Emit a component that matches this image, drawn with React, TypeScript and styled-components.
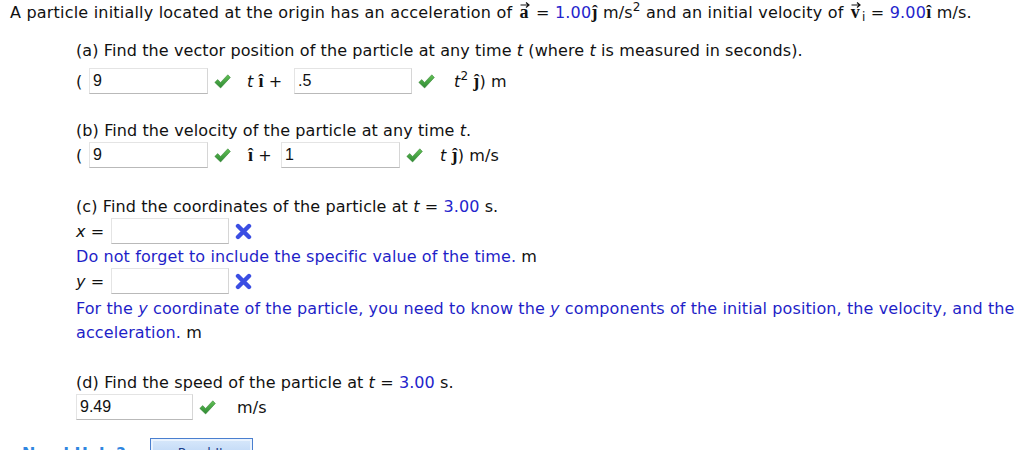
import React from "react";
import styled, { createGlobalStyle } from "styled-components";

const Global = createGlobalStyle`
  html, body { margin: 0; padding: 0; background: #fff; }
  body { font-family: "DejaVu Sans", Verdana, sans-serif; font-size: 16px; letter-spacing: 0.1px; color: #111; overflow: hidden; }
`;

const Page = styled.div`
  padding: 0 0 0 10px;
  height: 450px;
  overflow: hidden;
`;

const Question = styled.div`
  line-height: 24px;
  white-space: nowrap;
  letter-spacing: 0.2px;
`;

const Part = styled.div<{ $top: number }>`
  margin: ${(p) => p.$top}px 0 0 66px;
`;

const Title = styled.div`
  line-height: 22px;
  white-space: nowrap;
`;

const Row = styled.div<{ $top?: number }>`
  display: flex;
  align-items: center;
  height: 26px;
  margin-top: ${(p) => p.$top ?? 0}px;
  white-space: nowrap;
`;

const Hint = styled.div<{ $top?: number; $lh?: number }>`
  line-height: ${(p) => p.$lh ?? 24}px;
  margin-top: ${(p) => p.$top ?? 0}px;
  color: #1f1fc8;
  white-space: nowrap;
`;

const Plain = styled.span`
  color: #111;
`;

const Blue = styled.span`
  color: #2424cc;
`;

const Em = styled.i`
  font-style: italic;
`;

const Label = styled.span<{ $w?: number }>`
  display: inline-block;
  width: ${(p) => (p.$w ? `${p.$w}px` : "auto")};
`;

const Input = styled.div<{ $w?: number }>`
  box-sizing: border-box;
  width: ${(p) => p.$w ?? 119}px;
  height: 26px;
  border: 1px solid #e4e4e4;
  border-bottom-color: #b9b9b9;
  border-right-color: #d6d6d6;
  padding: 0 3px;
  line-height: 24px;
  font-family: "Liberation Sans", Arial, sans-serif;
  font-size: 16px;
  letter-spacing: 0;
  color: #111;
  background: #fff;
`;

const Mark = styled.span<{ $after: number }>`
  display: inline-flex;
  width: 17px;
  height: 17px;
  margin: 0 ${(p) => p.$after}px 0 6px;
  align-items: center;
  justify-content: center;
`;

const Vec = styled.span`
  position: relative;
  display: inline-block;
  padding: 0 2px;
  font-family: "Liberation Serif", "Times New Roman", serif;
  font-weight: bold;
  font-size: 18px;
  line-height: 20px;
`;

const Arrow = styled.svg`
  position: absolute;
  left: 2px;
  top: -1px;
  width: 10px;
  height: 7px;
`;

const Unit = styled.b`
  font-family: "Liberation Serif", "Times New Roman", serif;
  font-weight: bold;
  font-size: 18px;
`;

const Sub = styled.sub`
  font-size: 12px;
  vertical-align: -3px;
  line-height: 0;
`;

const Sup = styled.sup`
  font-size: 12px;
  vertical-align: 7px;
  line-height: 0;
`;

const HelpRow = styled.div`
  display: flex;
  align-items: flex-start;
  margin: 18px 0 0 12px;
  gap: 24px;
`;

const HelpText = styled.span`
  color: #2f86e0;
  font-weight: bold;
  font-size: 16px;
  line-height: 20px;
  padding-top: 6px;
`;

const HelpButton = styled.div`
  box-sizing: border-box;
  width: 103px;
  height: 24px;
  border: 1px solid #4a7fcf;
  background: linear-gradient(#d8e8fb, #b7d2f4);
  box-shadow: inset 0 0 0 2px #eaf3fe;
  color: #1d3f8a;
  font-size: 13px;
  text-align: center;
  line-height: 28px;
`;

const Check = ({ after }: { after: number }) => (
  <Mark $after={after}>
    <svg width="17" height="15" viewBox="0 0 17 15">
      <defs>
        <linearGradient id="g" x1="0" y1="0" x2="0" y2="1">
          <stop offset="0" stopColor="#62c055" />
          <stop offset="1" stopColor="#2e8a33" />
        </linearGradient>
      </defs>
      <path d="M0.8 8.4 L3.6 5.6 L6.6 8.4 L13.8 0.8 L16.4 3.4 L6.6 14 Z" fill="url(#g)" stroke="#2e7d2e" strokeWidth="0.5" strokeLinejoin="round" />
    </svg>
  </Mark>
);

const Cross = ({ after }: { after: number }) => (
  <Mark $after={after}>
    <svg width="17" height="17" viewBox="0 0 17 17">
      <path d="M3 3 L14 14 M14 3 L3 14" stroke="#3b4ee3" strokeWidth="4.4" strokeLinecap="round" />
    </svg>
  </Mark>
);

const VecSym = ({ ch }: { ch: string }) => (
  <Vec>
    {ch}
    <Arrow viewBox="0 0 10 7">
      <path d="M0.5 4 H8.5 M6 1.5 L9 4 L6 6.5" stroke="#111" strokeWidth="1.2" fill="none" />
    </Arrow>
  </Vec>
);

export default function App() {
  return (
    <>
      <Global />
      <Page>
        <Question>
          A particle initially located at the origin has an acceleration of <VecSym ch="a" /> = <Blue>1.00</Blue>
          <Unit>ĵ</Unit> m/s<Sup>2</Sup> and an initial velocity of <VecSym ch="v" />
          <Sub>i</Sub> = <Blue>9.00</Blue>
          <Unit>î</Unit> m/s.
        </Question>

        <Part $top={15}>
          <Title>
            (a) Find the vector position of the particle at any time <Em>t</Em> (where <Em>t</Em> is measured in seconds).
          </Title>
          <Row $top={6}>
            <Label $w={13}>(</Label>
            <Input>9</Input>
            <Check after={16} />
            <Label $w={47}>
              <Em>t</Em> <Unit>î</Unit> +
            </Label>
            <Input $w={118}>.5</Input>
            <Check after={19} />
            <Label>
              <Em>t</Em>
              <Sup>2</Sup> <Unit>ĵ</Unit>) m
            </Label>
          </Row>
        </Part>

        <Part $top={26}>
          <Title>
            (b) Find the velocity of the particle at any time <Em>t</Em>.
          </Title>
          <Row>
            <Label $w={13}>(</Label>
            <Input>9</Input>
            <Check after={17} />
            <Label $w={33}>
              <Unit>î</Unit> +
            </Label>
            <Input>1</Input>
            <Check after={17} />
            <Label>
              <Em>t</Em> <Unit>ĵ</Unit>) m/s
            </Label>
          </Row>
        </Part>

        <Part $top={28}>
          <Title>
            (c) Find the coordinates of the particle at <Em>t</Em> = <Blue>3.00</Blue> s.
          </Title>
          <Row>
            <Label $w={35}>
              <Em>x</Em> =
            </Label>
            <Input $w={118} />
            <Cross after={0} />
          </Row>
          <Hint $top={2} $lh={22}>
            Do not forget to include the specific value of the time. <Plain>m</Plain>
          </Hint>
          <Row>
            <Label $w={35}>
              <Em>y</Em> =
            </Label>
            <Input $w={118} />
            <Cross after={0} />
          </Row>
          <Hint $top={3}>
            For the <Em>y</Em> coordinate of the particle, you need to know the <Em>y</Em> components of the initial position, the
            velocity, and the
            <br />
            acceleration. <Plain>m</Plain>
          </Hint>
        </Part>

        <Part $top={27}>
          <Title>
            (d) Find the speed of the particle at <Em>t</Em> = <Blue>3.00</Blue> s.
          </Title>
          <Row>
            <Input $w={117}>9.49</Input>
            <Check after={21} />
            <Label>m/s</Label>
          </Row>
        </Part>

        <HelpRow>
          <HelpText>Need Help?</HelpText>
          <HelpButton>Read It</HelpButton>
        </HelpRow>
      </Page>
    </>
  );
}
